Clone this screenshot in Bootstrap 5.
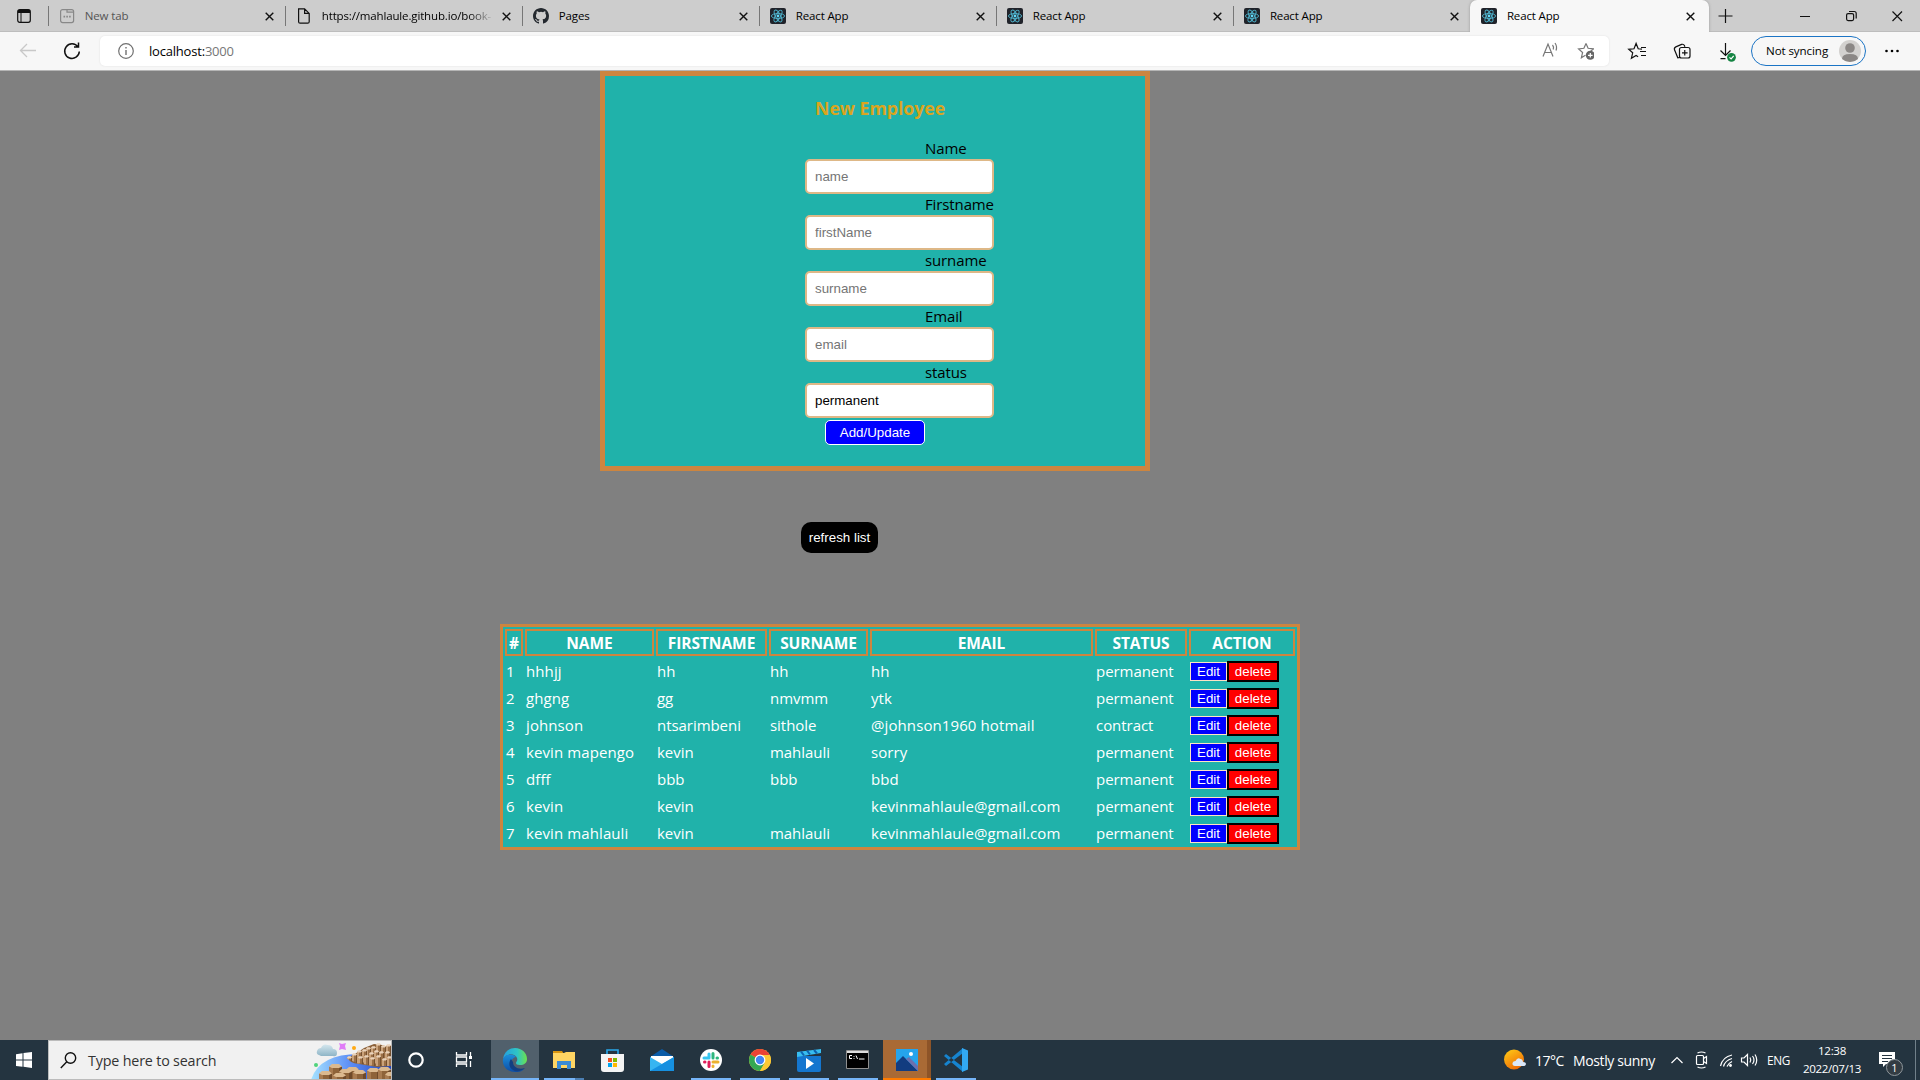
<!DOCTYPE html>
<html lang="en">
<head>
<meta charset="utf-8">
<title>React App</title>
<link rel="stylesheet" href="https://cdn.jsdelivr.net/npm/bootstrap@5.3.0/dist/css/bootstrap.min.css">
<style>
body{width:1920px;height:1080px;overflow:hidden;background:gray;font-family:"Open Sans","Noto Sans",sans-serif;font-size:15px;line-height:22px;color:#000}
svg{display:block;flex:none}
.ico{fill:none;stroke:#111;stroke-width:1.2}
.tabstrip{height:32px;background:#cdcdcd;font-size:11.5px;letter-spacing:-.15px;padding-left:47.8px;box-shadow:inset 0 -1px #bdbdbd}
.tabstrip .lead-ico{width:47px;margin-left:-47px;padding-left:16px}
.btab{width:237.03px;padding:0 11px 0 11px;position:relative}
.btab::before{content:"";position:absolute;left:0;top:6px;height:20px;width:1px;background:#777}
.btab .ttl{width:172px;margin-left:10px;overflow:hidden;white-space:nowrap}
.btab.dim .ttl{color:#555}
.btab .fade-ttl{-webkit-mask-image:linear-gradient(90deg,#000 85%,transparent)}
.btab.on{background:#f7f7f7;border-radius:7px 7px 0 0;width:239px;box-shadow:0 0 3px #999;clip-path:inset(0 -3px 0 -3px)}
.btab.on::before{display:none}
.toolbar-row{height:39px;background:#f7f7f7;border-bottom:1px solid #b5b5b5;font-size:12px;padding-top:4px}
.urlbar{width:1509px;height:30px;background:#fff;border-radius:5px;margin-left:16px;padding:0 15px 0 18px;font-size:13px;letter-spacing:-.2px;box-shadow:0 0 2px #ddd}
.pill{width:115px;height:30px;border:1.3px solid #1b74c5;border-radius:15px;padding:0 4px 0 14px;margin-left:15px;font-size:11.6px;letter-spacing:-.1px}
.emp-form{width:550px;height:400px;background:#20b2aa;border:5px solid peru;margin-left:600px;padding-top:20px}
.emp-form h3{font-size:17.8px;line-height:25px;letter-spacing:-.07px;font-weight:700;color:goldenrod;margin:0 0 17px 210px}
.emp-form label{display:block;margin-left:320px;height:21px;line-height:20px;font-size:15px;letter-spacing:-.12px}
.emp-form .field{display:block;width:189px;height:35px;margin-left:200px;border:2px solid burlywood;border-radius:5px;padding:0 8px;background:#fff;font:13.33px "Liberation Sans",Arial,sans-serif;appearance:none;color:#000}
.emp-form .field::placeholder{color:#757575}
.add-btn{display:block;width:100px;height:25px;margin:2px 0 0 220px;background:#00f;color:#fff;border:1px solid #fff;border-radius:5px;font:13.33px "Liberation Sans",Arial,sans-serif;padding:0}
.refresh-btn{display:block;width:77px;height:31px;margin:51px 0 71px 801px;background:#000;color:#fff;border:0;border-radius:10px;font:13.33px "Liberation Sans",Arial,sans-serif;padding:0;white-space:nowrap}
.emp-table{width:800px;table-layout:fixed;border-collapse:separate;border-spacing:2px;border:3px solid peru;background:#20b2aa;color:#fff;margin-left:500px;line-height:21px;letter-spacing:-.05px}
.emp-table th{border:2px solid peru;height:27px;padding:1px 0 0;text-align:center;font-weight:700;font-size:15.5px}
.emp-table td{height:25px;padding:3px 1px 1px;white-space:nowrap}
.emp-table td:nth-child(2),.emp-table td:nth-child(5){letter-spacing:.1px}
.emp-table button{font:13.33px/15px "Liberation Sans",Arial,sans-serif;color:#fff;padding:0}
.edit-btn{width:37px;height:19px;background:#00f;border:1px solid bisque}
.del-btn{width:52px;height:21px;background:red;border:2px solid #000}
.os-bar{height:40px;background:#243440;color:#fff;font-size:14px}
.find{width:344px;height:40px;background:#f1f1f1;border:1px solid #bcbcbc;color:#333;font-size:14.3px;padding-left:11px}
.find .hint{margin:2px 0 0 11px;letter-spacing:-.17px}
.app-ico{width:48px;height:40px;margin-right:1px;position:relative}
.app-ico.run::after{content:"";position:absolute;bottom:0;left:4px;width:40px;height:2px;background:#76b5f8}
.app-ico.edge{background:#51606c}
.app-ico.edge::after{left:0;width:48px}
.app-ico.photo{background:linear-gradient(90deg,#a96a35 44px,#8d5428 44px)}
.app-ico.photo::after{left:0;width:48px;background:#ff7b00}
.app-ico.files::after{background:linear-gradient(90deg,#76b5f8 31px,#4c7fb3 31px)}
.tray{margin-left:auto;width:440px;padding-left:24px}
.tray .wx{padding-top:2px}
.clock{font-size:11.6px;line-height:18px;text-align:center;width:64px;letter-spacing:-.35px}
</style>
<script src="https://cdn.jsdelivr.net/npm/bootstrap@5.3.0/dist/js/bootstrap.bundle.min.js"></script>
</head>
<body class="d-flex flex-column">
<svg width="0" height="0" class="position-absolute">
<symbol id="x" viewBox="0 0 9 9"><path d="M.7.7l7.6 7.6M8.3.7L.7 8.3" stroke="#111" stroke-width="1.4"/></symbol>
<symbol id="react" viewBox="0 0 16 16"><rect width="16" height="16" rx="2" fill="#20232a"/><g fill="none" stroke="#4fb3cc" stroke-width=".9"><ellipse cx="8" cy="8" rx="6.6" ry="2.5"/><ellipse cx="8" cy="8" rx="6.6" ry="2.5" transform="rotate(60 8 8)"/><ellipse cx="8" cy="8" rx="6.6" ry="2.5" transform="rotate(120 8 8)"/></g><circle cx="8" cy="8" r="1.4" fill="#61dafb"/></symbol>
<g id="col"><path d="M0 1.500h2v12H0z" fill="#caa27a"/><path d="M2 1.500h2v12H2z" fill="#9b7047"/><path d="M4 1.500h1v12H4z" fill="#75502f"/><path d="M0 1.500L1.200.3h2.600L5 1.500 3.800 2.500H1.200z" fill="#ead3bb"/></g>
<g id="stone"><path d="M0 2.500h4v20H0z" fill="#a87b50"/><path d="M4 3h6v20H4z" fill="#8e6339"/><path d="M10 2.500h3v20h-3z" fill="#6f4a2a"/><path d="M0 2.500L3 0h7l3 2.500L10 4H3z" fill="#dbb98f"/></g>
</svg>

<div class="tabstrip d-flex align-items-stretch">
 <div class="lead-ico d-flex align-items-center"><svg width="14" height="14" viewBox="0 0 14 14" class="ico"><rect x=".7" y=".7" width="12.6" height="12.6" rx="2"/><path d="M1 2.5h12M4 4v9" stroke-width="1"/><path d="M1 1h12v3H1z" fill="#111" stroke="none"/></svg></div>
 <div class="btab dim d-flex align-items-center"><svg width="16" height="16" viewBox="0 0 16 16" class="ico" style="stroke:#888"><rect x="1.6" y="1.6" width="13" height="13" rx="2"/><path d="M8 1.6v2.5h6.5"/><path d="M4.5 8.6h1.6M7.3 8.6h1.6M10.1 8.6h1.6" stroke-width="1.6"/></svg><span class="ttl">New tab</span><svg width="9" height="9" class="ms-auto"><use href="#x"/></svg></div>
 <div class="btab d-flex align-items-center"><svg width="16" height="16" viewBox="0 0 16 16" class="ico"><path d="M2.6.8h6l4.6 4.6v8.3q0 1.5-1.5 1.5H4.1q-1.5 0-1.5-1.5zM8.6.8v4.6h4.6"/></svg><span class="ttl fade-ttl">https://mahlaule.github.io/book-</span><svg width="9" height="9" class="ms-auto"><use href="#x"/></svg></div>
 <div class="btab d-flex align-items-center"><svg width="16" height="16" viewBox="0 0 16 16" fill="#24292f"><path d="M8 0C3.58 0 0 3.58 0 8c0 3.54 2.29 6.53 5.47 7.59.4.07.55-.17.55-.38 0-.19-.01-.82-.01-1.49-2.01.37-2.53-.49-2.69-.94-.09-.23-.48-.94-.82-1.13-.28-.15-.68-.52-.01-.53.63-.01 1.08.58 1.23.82.72 1.21 1.87.87 2.33.66.07-.52.28-.87.51-1.07-1.78-.2-3.64-.89-3.64-3.95 0-.87.31-1.59.82-2.15-.08-.2-.36-1.02.08-2.12 0 0 .67-.21 2.2.82a7.6 7.6 0 014 0c1.53-1.04 2.2-.82 2.2-.82.44 1.1.16 1.92.08 2.12.51.56.82 1.27.82 2.15 0 3.07-1.87 3.75-3.65 3.95.29.25.54.73.54 1.48 0 1.07-.01 1.93-.01 2.2 0 .21.15.46.55.38A8 8 0 0016 8c0-4.42-3.58-8-8-8z"/></svg><span class="ttl">Pages</span><svg width="9" height="9" class="ms-auto"><use href="#x"/></svg></div>
 <div class="btab d-flex align-items-center"><svg width="16" height="16"><use href="#react"/></svg><span class="ttl">React App</span><svg width="9" height="9" class="ms-auto"><use href="#x"/></svg></div>
 <div class="btab d-flex align-items-center"><svg width="16" height="16"><use href="#react"/></svg><span class="ttl">React App</span><svg width="9" height="9" class="ms-auto"><use href="#x"/></svg></div>
 <div class="btab d-flex align-items-center"><svg width="16" height="16"><use href="#react"/></svg><span class="ttl">React App</span><svg width="9" height="9" class="ms-auto"><use href="#x"/></svg></div>
 <div class="btab on d-flex align-items-center"><svg width="16" height="16"><use href="#react"/></svg><span class="ttl">React App</span><svg width="9" height="9" style="margin-left:7px"><use href="#x"/></svg></div>
 <svg width="211" height="32" class="ico" viewBox="1709 0 211 32"><path d="M1718.5 16h14M1725.500 9v14M1800 16.500h10"/><rect x="1846.600" y="13.600" width="7" height="7" rx="1.500"/><path d="M1849 11.500h5.200q2 0 2 2v5"/><path d="M1892.500 11.500l9.500 9.500M1902 11.500l-9.500 9.500"/></svg>
</div>

<div class="toolbar-row d-flex align-items-start">
 <svg width="84" height="30" viewBox="0 36 84 30" class="ico"><path d="M36 50.500H20.500M27 44l-6.500 6.500L27 57" stroke="#c8c8c8" stroke-width="1.300"/><path d="M78 47A7.300 7.300 0 1 0 79.300 51.500M78.500 42.500V47H74" stroke-width="1.500"/></svg>
 <div class="urlbar d-flex align-items-center"><svg width="16" height="16" viewBox="0 0 16 16" class="ico" style="stroke:#707070"><circle cx="8" cy="8" r="7.300"/><path d="M8 7v5M8 4v1.500" stroke-width="1.400"/></svg><span style="margin-left:15px">localhost:<span style="color:#767676">3000</span></span>
  <svg width="54" height="30" viewBox="1540 36 54 30" class="ico ms-auto" style="stroke:#777"><path d="M1543 56.500l5-12.500 5 12.500M1545 52.500h6.500M1552.500 45q1.700 2 .7 4.500M1555 43q2.500 3.500 1 7.500"/><path d="M1586 43.500l2.100 4.800 5.300.6-4 3.500M1586 43.500l-2.100 4.800-5.300.6 4 3.600-1.200 5.200 4-2.400"/><circle cx="1590.300" cy="55.300" r="4.500" fill="#666" stroke="none"/><path d="M1590.300 53v4.600M1588 55.300h4.600" stroke="#fff"/></svg></div>
 <svg width="127" height="30" viewBox="1608 36 127 30" class="ico"><path d="M1641 49.200l-3.800-.4-2.100-5.300-2.100 5.300-5.300.5 4 3.500-1.300 5.500 4.700-2.800 2 1.200M1640 47.500h5M1639 51.500h6M1640 55.500h5"/><path d="M1679 57.500l-2.200.3-3.300-8q-.6-2 1.300-2.900l5.800-2.500q2-.6 2.800 1.100l.5 1.300"/><rect x="1678.500" y="47.500" width="10.500" height="10.500" rx="2"/><path d="M1683.750 50v5.600M1681 52.800h5.600M1724.500 43v12M1719.500 50.500l5 5 5-5M1719.500 58.700h5"/><circle cx="1730.500" cy="57.300" r="4.400" fill="#158443" stroke="none"/><path d="M1728.500 57.300l1.600 1.600 2.600-3" stroke="#fff"/></svg>
 <div class="pill d-flex align-items-center justify-content-between text-nowrap">Not syncing<svg width="22" height="22" viewBox="0 0 22 22"><circle cx="11" cy="11" r="11" fill="#d3d1cf"/><circle cx="11" cy="8" r="4.800" fill="#8b8785"/><path d="M3 19q0-5 8-5t8 5q-3.500 3-8 3t-8-3z" fill="#8b8785"/></svg></div>
 <svg width="16" height="30" style="margin-left:18px"><circle cx="2.500" cy="15" r="1.300"/><circle cx="8" cy="15" r="1.300"/><circle cx="13.500" cy="15" r="1.300"/></svg>
</div>

<main class="flex-grow-1">
 <form class="emp-form">
  <h3>New Employee</h3>
  <label>Name</label><input class="field" placeholder="name">
  <label>Firstname</label><input class="field" placeholder="firstName">
  <label>surname</label><input class="field" placeholder="surname">
  <label>Email</label><input class="field" placeholder="email">
  <label>status</label><input class="field" value="permanent">
  <button type="button" class="add-btn">Add/Update</button>
 </form>
 <button class="refresh-btn">refresh list</button>
 <table class="emp-table">
  <colgroup><col style="width:18px"><col style="width:129px"><col style="width:111px"><col style="width:99px"><col style="width:223px"><col style="width:92px"><col style="width:106px"></colgroup>
  <thead><tr><th>#</th><th>NAME</th><th>FIRSTNAME</th><th>SURNAME</th><th>EMAIL</th><th>STATUS</th><th>ACTION</th></tr></thead>
  <tbody>
  <tr><td>1</td><td>hhhjj</td><td>hh</td><td>hh</td><td>hh</td><td>permanent</td><td><div class="d-flex align-items-center"><button class="edit-btn">Edit</button><button class="del-btn">delete</button></div></td></tr>
  <tr><td>2</td><td>ghgng</td><td>gg</td><td>nmvmm</td><td>ytk</td><td>permanent</td><td><div class="d-flex align-items-center"><button class="edit-btn">Edit</button><button class="del-btn">delete</button></div></td></tr>
  <tr><td>3</td><td>johnson</td><td>ntsarimbeni</td><td>sithole</td><td>@johnson1960 hotmail</td><td>contract</td><td><div class="d-flex align-items-center"><button class="edit-btn">Edit</button><button class="del-btn">delete</button></div></td></tr>
  <tr><td>4</td><td>kevin mapengo</td><td>kevin</td><td>mahlauli</td><td>sorry</td><td>permanent</td><td><div class="d-flex align-items-center"><button class="edit-btn">Edit</button><button class="del-btn">delete</button></div></td></tr>
  <tr><td>5</td><td>dfff</td><td>bbb</td><td>bbb</td><td>bbd</td><td>permanent</td><td><div class="d-flex align-items-center"><button class="edit-btn">Edit</button><button class="del-btn">delete</button></div></td></tr>
  <tr><td>6</td><td>kevin</td><td>kevin</td><td></td><td>kevinmahlaule@gmail.com</td><td>permanent</td><td><div class="d-flex align-items-center"><button class="edit-btn">Edit</button><button class="del-btn">delete</button></div></td></tr>
  <tr><td>7</td><td>kevin mahlauli</td><td>kevin</td><td>mahlauli</td><td>kevinmahlaule@gmail.com</td><td>permanent</td><td><div class="d-flex align-items-center"><button class="edit-btn">Edit</button><button class="del-btn">delete</button></div></td></tr>
  </tbody>
 </table>
</main>

<footer class="os-bar d-flex align-items-center">
 <svg width="48" height="40" fill="#fff"><path d="M16 14.200l6.500-.9v6.200H16zM23.500 13.100L32 12v7.500h-8.500zM16 20.500h6.500v6.300l-6.500-.9zM23.500 20.500H32V28l-8.500-1.200z"/></svg>
 <div class="find d-flex align-items-center"><svg width="17" height="17" viewBox="0 0 17 17" class="ico"><circle cx="10.500" cy="6" r="5.200" stroke-width="1.400"/><path d="M6.800 9.700L.8 16" stroke-width="1.400"/></svg><span class="hint">Type here to search</span>
  <svg width="81" height="38" viewBox="311 1041 81 38" class="ms-auto">
   <defs><linearGradient id="wa"><stop stop-color="#a5e2ff"/><stop offset=".5" stop-color="#5b8cf5"/><stop offset="1" stop-color="#2146bd"/></linearGradient><linearGradient id="cl" x2="0" y2="1"><stop stop-color="#d5e7ee"/><stop offset="1" stop-color="#8db4c6"/></linearGradient></defs>
   <path d="M312 1080q8-26 48-26h32v26z" fill="url(#wa)"/>
   <path d="M320 1055q-3-1-2-4t4-3q2-5 7-3 4 0 5 4 4 0 4 4t-4 3h-12z" fill="url(#cl)"/>
   <path d="M340 1043l3 1 4-1-1 3 1 4-4-1-3 1 1-4z" fill="#e07cf7"/><circle cx="355" cy="1048" r="2" fill="#ffa914"/><circle cx="317" cy="1065" r="2" fill="#4fd37b"/>
   <path d="M349 1058l10-6 6-4 10-4 8 1 9 3v18l-14 1-18-3q-10-1-11-6z" fill="#8a6039"/>
   <use href="#col" x="377" y="1043"/><use href="#col" x="372" y="1046"/><use href="#col" x="382" y="1045"/><use href="#col" x="387" y="1044"/><use href="#col" x="367" y="1047"/><use href="#col" x="363" y="1049"/><use href="#col" x="375" y="1050"/><use href="#col" x="380" y="1051"/><use href="#col" x="386" y="1051"/><use href="#col" x="358" y="1050"/><use href="#col" x="370" y="1052"/>
   <g transform="translate(0 0)"><clipPath id="lo"><path d="M346 1040h46v26h-16l-18-3-12-5z"/></clipPath><g clip-path="url(#lo)"><use href="#col" x="353" y="1053"/><use href="#col" x="348" y="1056"/><use href="#col" x="359" y="1056"/><use href="#col" x="365" y="1055"/><use href="#col" x="371" y="1057"/><use href="#col" x="377" y="1055"/><use href="#col" x="383" y="1058"/><use href="#col" x="388" y="1056"/></g></g>
   <use href="#stone" x="330" y="1064"/><use href="#stone" x="347" y="1067"/><use href="#stone" x="340" y="1069"/><use href="#stone" x="368" y="1068"/><use href="#stone" x="379" y="1067"/><use href="#stone" x="320" y="1071"/><use href="#stone" x="334" y="1073"/><use href="#stone" x="354" y="1070"/><use href="#stone" x="386" y="1072"/>
  </svg></div>
 <svg width="98" height="40" viewBox="392 1040 98 40" fill="none" stroke="#fff" style="margin-right:1px"><circle cx="416" cy="1060" r="6.700" stroke-width="2.200"/><path d="M456.500 1052v3h10v-3M456.500 1067v-3h10v3M456.500 1057h10v5h-10zM470.500 1052v4M470.500 1061v6" stroke-width="1.300"/><path d="M469 1056h3v3h-3z" fill="#fff" stroke="none"/></svg>
 <div class="app-ico edge run"><svg width="48" height="40"><defs><linearGradient id="e1"><stop stop-color="#249fe0"/><stop offset=".6" stop-color="#2fc5c5"/><stop offset="1" stop-color="#6de34b"/></linearGradient><linearGradient id="e2" x2="0" y2="1"><stop stop-color="#1b8fdc"/><stop offset="1" stop-color="#0d4da5"/></linearGradient></defs><path d="M12 19C13 12 18 8 24 8c7 0 12 5 12 11 0 4-3 6-7 6-3 0-4-1-4-2 0-1 2-2 1-5-2-5-11-5-14 1z" fill="url(#e1)"/><path d="M12 19c3-6 11-5 13-2-5 1-7 8-2 12 4 3 8 2 11-1-3 4-6 4-10 4-8 0-13-6-12-13z" fill="url(#e2)"/><path d="M20 19c-3 4-2 10 4 12 4 1 8-1 10-3-7 2-12-1-12-6z" fill="#123f82"/></svg></div>
 <div class="app-ico files run"><svg width="48" height="40"><path d="M13 11h9l2 3h-11z" fill="#d99510"/><path d="M13 13h11l2-1h9v16H13z" fill="#ffd563"/><path d="M17 29v-8h14v8h-4v-4h-6v4z" fill="#3b8bd5"/></svg></div>
 <div class="app-ico"><svg width="48" height="40"><path d="M18 14v-4h11v4" fill="none" stroke="#28a8ea" stroke-width="1.600"/><path d="M12 14h23v15q0 3-3 3H15q-3 0-3-3z" fill="#f4f4f4"/><path d="M19 18h4v4h-4z" fill="#f25022"/><path d="M24 18h4v4h-4z" fill="#7fba00"/><path d="M19 23h4v4h-4z" fill="#00a4ef"/><path d="M24 23h4v4h-4z" fill="#ffb900"/></svg></div>
 <div class="app-ico"><svg width="48" height="40"><path d="M12 17l12-8 12 8v3H12z" fill="#0b5ca8"/><path d="M13 16h22v8H13z" fill="#fff"/><path d="M12 17l12 7 12-7v14H12z" fill="#37b5f1"/><path d="M12 31l24-14v14z" fill="#1690e0"/></svg></div>
 <div class="app-ico run"><svg width="48" height="40" fill="none" stroke-width="3" stroke-linecap="round"><circle cx="24" cy="20" r="11" fill="#fff"/><path d="M22 14v4M17 18h5" stroke="#36c5f0"/><path d="M26 13.500v4.500M30 18h.5" stroke="#2eb67d"/><path d="M26 22h5M26 26v.5" stroke="#ecb22e"/><path d="M22 22v4.500M17.500 22h.5" stroke="#e01e5a"/></svg></div>
 <div class="app-ico run"><svg width="48" height="40"><circle cx="24" cy="20" r="11" fill="#fcc934"/><path d="M24 20l-9.500-5.500a11 11 0 0 1 19 0z" fill="#ea4335"/><path d="M14.500 14.500A11 11 0 0 0 24 31l5-8.500-5-2.500z" fill="#34a853"/><path d="M24 15h9.800a11 11 0 0 1-9.800 16l4.600-8z" fill="#fcc934"/><circle cx="24" cy="20" r="5.400" fill="#fff"/><circle cx="24" cy="20" r="4.200" fill="#4285f4"/></svg></div>
 <div class="app-ico run"><svg width="48" height="40"><path d="M12 16h24v14q0 2-2 2H14q-2 0-2-2z" fill="#1476cf"/><path d="M12 12l24-3v4l-24 4z" fill="#37bdf0"/><path d="M16 11.500l3 4M22 10.500l3 4M29 10l3 3.500" stroke="#0c63b0" stroke-width="2"/><path d="M21 18l8 5.500-8 5.500z" fill="#fff"/></svg></div>
 <div class="app-ico run"><svg width="48" height="40"><path d="M12.500 10.500h22v18h-22z" stroke="#909090" fill="#000"/><path d="M13 11h21v2H13z" fill="#ddd"/><path d="M18 15.500h-2.500v3H18M20 16v.8M20 18v.8M22 15.500l1.500 3.500M25 19h5.500" fill="none" stroke="#fff"/></svg></div>
 <div class="app-ico photo run"><svg width="48" height="40"><path d="M13 9h22v22H13z" fill="#25a4ec"/><path d="M13 23l7-7 15 15H13z" fill="#123c80"/><path d="M23 19l3-2 9 9v5z" fill="#6c6fae"/><circle cx="28" cy="14" r="2" fill="#fff"/></svg></div>
 <div class="app-ico run"><svg width="48" height="40"><path d="M31 13L14 26l-2-2 19-16M31 27L14 14l-2 2 19 16" fill="#1684cf"/><path d="M30 8l6 2.500v19L30 32z" fill="#32a8f2"/></svg></div>
 <div class="tray d-flex align-items-center text-nowrap">
  <svg width="22" height="22" viewBox="0 0 22 22"><defs><linearGradient id="su" x2=".6" y2="1"><stop stop-color="#ffcf17"/><stop offset="1" stop-color="#f06b05"/></linearGradient></defs><circle cx="10" cy="10.500" r="10" fill="url(#su)"/><path d="M11 17q-3-.5-2.500-3 .5-2 3-2 2-4 5-2 2 0 2.500 3 3 0 3 2t-3 2z" fill="#dce8f8"/></svg>
  <span class="wx" style="margin-left:9px;width:38px;letter-spacing:-.5px">17°C</span><span class="wx" style="width:97px;letter-spacing:-.37px">Mostly sunny</span>
  <svg width="90" height="40" viewBox="1670 1040 90 40" fill="none" stroke="#fff" stroke-width="1.200"><path d="M1671.500 1063l5.500-5.500 5.500 5.500"/><rect x="1696.500" y="1055.500" width="7" height="9" rx="1"/><path d="M1703.500 1058.500l3-2v7l-3-2M1697.500 1053q4-2 8 0M1697.500 1067q4 2 8 0"/><path d="M1720.500 1066q2-9 11.500-11M1723.500 1066.500q1.500-6 8.500-8M1727 1066.500q1-3 5-5"/><circle cx="1730.500" cy="1065.500" r="1.400" fill="#fff" stroke="none"/><path d="M1741.500 1058h2.500l3.500-3.500v11l-3.500-3.500h-2.500zM1750 1057.500q1.500 2.500 0 5M1752.500 1056q3 4 0 8M1755 1054.500q3.500 5.500 0 11"/></svg>
  <span style="margin-left:7px;width:33px;font-size:11.800px;letter-spacing:-.3px">ENG</span>
  <div class="clock">12:38<br>2022/07/13</div>
  <svg width="56" height="40" viewBox="1864 1040 56 40"><path d="M1879 1052h16v12h-9l-3 3v-3h-4z" fill="#fff"/><path d="M1882 1055.500h10M1882 1058.500h10M1882 1061.500h6" stroke="#243440"/><circle cx="1894.500" cy="1067.500" r="8" fill="#333c43" stroke="#8f979c"/><text x="1894.500" y="1071.500" fill="#fff" font-size="11" text-anchor="middle">1</text><path d="M1915.500 1040v40" stroke="#71808a"/></svg>
 </div>
</footer>
</body>
</html>
